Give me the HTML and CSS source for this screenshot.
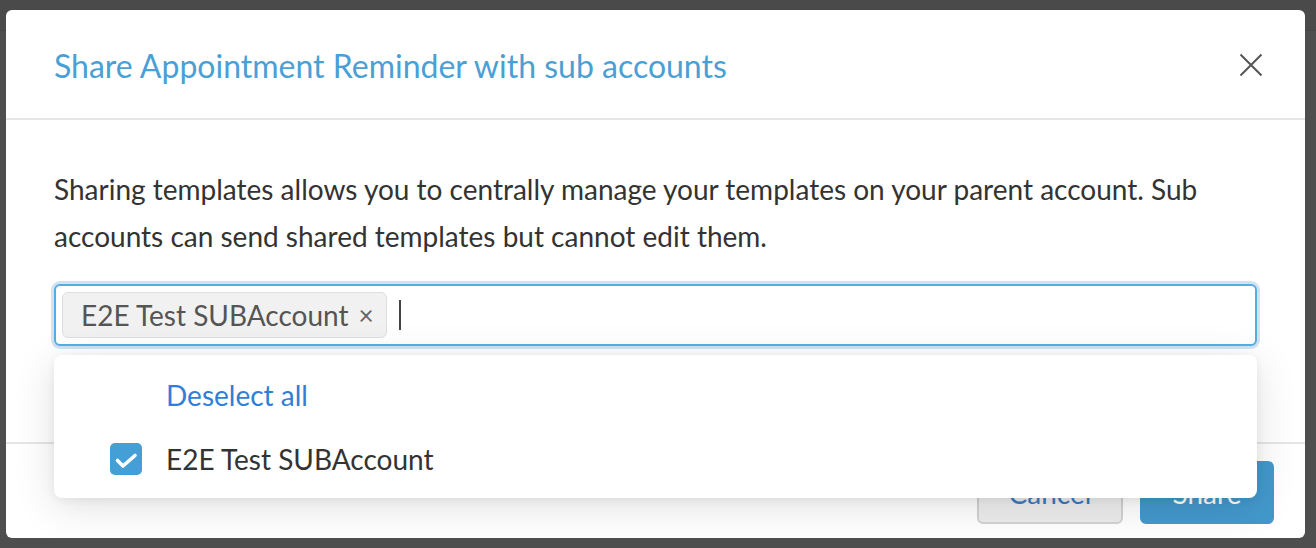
FILE: index.html
```html
<!DOCTYPE html>
<html>
<head>
<meta charset="utf-8">
<link rel="stylesheet" href="styles.css">
</head>
<body>
<div class="backdrop-bar"></div>
<div class="overlay">
  <div class="modal">
    <div class="modal-header">
      <h2 class="modal-title">Share Appointment Reminder with sub accounts</h2>
      <button class="close-btn" aria-label="Close">
        <svg width="24" height="24" viewBox="0 0 24 24"><path d="M1.5 1.5 L22.5 22.5 M22.5 1.5 L1.5 22.5" stroke="#555" stroke-width="2" fill="none"/></svg>
      </button>
    </div>
    <div class="modal-body">
      <p class="desc">Sharing templates allows you to centrally manage your templates on your parent account. Sub accounts can send shared templates but cannot edit them.</p>
      <div class="select-wrap">
        <div class="select-input">
          <span class="chip">E2E Test SUBAccount <span class="chip-x">×</span></span>
          <span class="caret"></span>
        </div>
        <div class="dropdown">
          <div class="dd-row dd-action">Deselect all</div>
          <div class="dd-row dd-option">
            <span class="checkbox">
              <svg width="32" height="32" viewBox="0 0 32 32"><path d="M7.5 17.5 L13 23 L25 12.5" stroke="#fff" stroke-width="3.6" fill="none" stroke-linecap="round" stroke-linejoin="round"/></svg>
            </span>
            <span>E2E Test SUBAccount</span>
          </div>
        </div>
      </div>
    </div>
    <div class="modal-footer">
      <button class="btn btn-cancel">Cancel</button>
      <button class="btn btn-share">Share</button>
    </div>
  </div>
</div>
</body>
</html>
```
FILE: styles.css
```css
* { box-sizing: border-box; }
html, body {
  margin: 0;
  padding: 0;
  background: #4e4e4e;
  font-family: Lato, "Open Sans", sans-serif;
  overflow: hidden;
}
.backdrop-bar {
  position: absolute;
  left: 0; top: 0; right: 0;
  height: 31px;
  background: #4a4a4a;
  border-bottom: 1px solid #474747;
}
.overlay {
  position: relative;
  padding: 10px 11px 0 6px;
}
.modal {
  width: 1299px;
  height: 528px;
  background: #fff;
  border-radius: 6px;
  display: flex;
  flex-direction: column;
}
.modal-header {
  height: 110px;
  border-bottom: 2px solid #e6e6e6;
  display: flex;
  align-items: center;
  justify-content: space-between;
  padding: 0 42px 0 48px;
}
.modal-title {
  margin: 0;
  font-size: 32px;
  font-weight: 400;
  color: #4a9fd5;
  padding-top: 2px;
}
.close-btn {
  background: none;
  border: 0;
  padding: 0;
  width: 24px;
  height: 24px;
  cursor: pointer;
  margin-top: 2px;
}
.modal-body {
  padding: 46px 48px 0 48px;
  height: 324px;
  border-bottom: 2px solid #e6e6e6;
}
.desc {
  margin: 0;
  font-size: 28px;
  line-height: 47px;
  color: #333;
}
.select-wrap {
  position: relative;
  margin-top: 24px;
}
.select-input {
  height: 62px;
  border: 2px solid #52b0e0;
  border-radius: 6px;
  box-shadow: 0 0 0 3px #d3e1f3;
  background: #fff;
  display: flex;
  align-items: center;
  padding: 0 6px;
  gap: 12px;
}
.chip {
  height: 46px;
  display: inline-flex;
  align-items: center;
  padding: 0 12px 0 18px;
  background: #f1f1f1;
  border: 1px solid #dedede;
  border-radius: 6px;
  font-size: 28px;
  color: #555;
}
.chip-x {
  margin-left: 10px;
  font-size: 26px;
  color: #666;
}
.caret {
  width: 2px;
  height: 30px;
  background: #444;
}
.dropdown {
  position: absolute;
  left: 0;
  right: 0;
  top: 71px;
  height: 143px;
  background: #fff;
  border-radius: 8px;
  box-shadow: 0 8px 40px rgba(0, 0, 0, 0.13), 0 2px 8px rgba(0,0,0,0.06);
  padding-top: 16px;
  z-index: 5;
}
.dd-row {
  height: 48px;
  display: flex;
  align-items: center;
  padding-left: 112px;
  font-size: 28px;
}
.dd-action {
  color: #2f7ed8;
}
.dd-option {
  margin-top: 16px;
  color: #333;
  padding-left: 56px;
  gap: 24px;
}
.checkbox {
  width: 32px;
  height: 32px;
  border-radius: 5px;
  background: #439fd6;
  display: inline-flex;
}
.modal-footer {
  flex: 1;
  display: flex;
  justify-content: flex-end;
  align-items: flex-start;
  gap: 17px;
  padding: 17px 31px 0 0;
}
.btn {
  height: 63px;
  border-radius: 6px;
  font-family: Lato, sans-serif;
  font-size: 28px;
  cursor: pointer;
}
.btn-cancel {
  width: 146px;
  background: linear-gradient(#f7f7f7, #ececec);
  border: 2px solid #d2d2d2;
  color: #3a7bbf;
}
.btn-share {
  width: 134px;
  background: #4399cc;
  border: 0;
  color: #fff;
}
```
